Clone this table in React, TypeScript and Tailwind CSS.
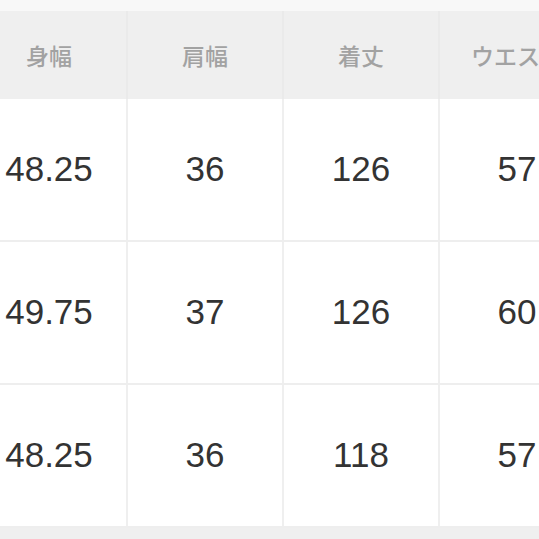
import React from 'react';

const headers = ['身幅', '肩幅', '着丈', 'ウエスト'];
const rows = [
  ['48.25', '36', '126', '57'],
  ['49.75', '37', '126', '60'],
  ['48.25', '36', '118', '57'],
];

export default function App() {
  return (
    <div className="w-[539px] h-[539px] overflow-hidden bg-[#efefef]">
      <div className="h-[11px] bg-[#f8f8f8]" />
      <div className="ml-[-28px] w-[624px]">
        <div className="flex h-[88px] bg-[#efefef]">
          {headers.map((h) => (
            <div
              key={h}
              className="w-[156px] shrink-0 flex items-center justify-center border-r-2 border-[#eaeaea] text-[23px] font-medium text-[#a2a2a2] whitespace-nowrap"
              style={{ fontFamily: '"Noto Sans CJK JP", sans-serif' }}
            >
              {h}
            </div>
          ))}
        </div>
        {rows.map((r, i) => (
          <div key={i} className="flex h-[143px] bg-white border-b-2 border-[#eeeeee]">
            {r.map((v, j) => (
              <div
                key={j}
                className="w-[156px] shrink-0 flex items-center justify-center border-r-2 border-[#efefef] text-[35px] text-[#333333]"
                style={{ fontFamily: '"Liberation Sans", Arial, sans-serif' }}
              >
                {v}
              </div>
            ))}
          </div>
        ))}
      </div>
    </div>
  );
}
